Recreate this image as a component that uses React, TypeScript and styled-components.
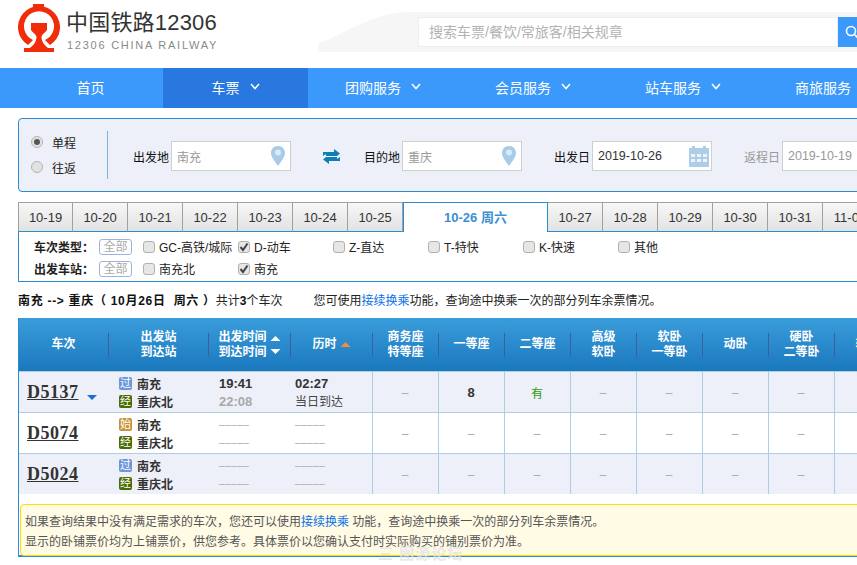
import React from "react";
import styled, { createGlobalStyle } from "styled-components";

const FONT = `"Liberation Sans", "Noto Sans CJK SC", sans-serif`;

const Global = createGlobalStyle`
  html, body { margin: 0; padding: 0; overflow: hidden; background: #fff; width: 857px; height: 565px; }
  body { font-family: ${FONT}; font-size: 12px; color: #222; }
  * { box-sizing: border-box; }
`;

const Page = styled.div`
  width: 1240px;
  height: 565px;
  position: relative;
  overflow: hidden;
`;

const Header = styled.header`
  height: 68px;
  display: flex;
  align-items: flex-start;
  padding-left: 18px;
`;
const LogoMark = styled.svg`
  width: 42px;
  height: 49px;
  margin-top: 3px;
  flex: none;
`;
const Brand = styled.div`
  margin-left: 7px;
  width: 251px;
  flex: none;
  padding-top: 9px;
`;
const BrandName = styled.div`
  font-size: 22px;
  line-height: 28px;
  letter-spacing: 0.2px;
  color: #333;
  white-space: nowrap;
  margin-left: -1px;
`;
const BrandSub = styled.div`
  font-size: 11px;
  line-height: 14px;
  margin-top: 1px;
  letter-spacing: 1.75px;
  color: #8a8a8a;
  white-space: nowrap;
`;
const Swoosh = styled.svg`
  width: 100px;
  height: 40px;
  margin-top: 12px;
  flex: none;
`;
const SearchBand = styled.div`
  flex: 1;
  margin-top: 12px;
  height: 40px;
  padding: 5px 0;
  background: #f6f6f6;
  display: flex;
`;
const SearchInput = styled.div`
  width: 420px;
  height: 30px;
  background: #fff;
  border: 1px solid #eee;
  font-size: 14px;
  line-height: 28px;
  color: #b2b2b2;
  padding-left: 10px;
`;
const SearchButton = styled.div`
  width: 60px;
  height: 30px;
  background: #3b99fc;
  display: flex;
  align-items: center;
  padding-left: 7px;
  color: #fff;
`;

const Nav = styled.nav`
  height: 40px;
  background: #3b99fc;
  display: flex;
  padding-left: 18px;
`;
const NavItem = styled.div<{ $active?: boolean; $w: number }>`
  width: ${(p) => p.$w}px;
  background: ${(p) => (p.$active ? "#2878e0" : "transparent")};
  display: flex;
  align-items: center;
  justify-content: center;
  gap: 10px;
  color: #fff;
  font-size: 14px;
  flex: none;
  padding-bottom: 2px;
`;
const Chevron = styled.svg`
  width: 10px;
  height: 7px;
  margin-top: -2px;
`;

const Main = styled.main`
  padding: 10px 0 0 18px;
`;
const QueryForm = styled.div`
  height: 74px;
  border: 1px solid #2b8cd2;
  border-radius: 4px;
  background: #edf0f8;
  display: flex;
  align-items: center;
  padding: 2px 0 0 12px;
`;
const RadioGroup = styled.div`
  display: flex;
  flex-direction: column;
  gap: 9px;
  width: 45px;
  flex: none;
  margin-top: -3px;
`;
const RadioRow = styled.div`
  display: flex;
  align-items: center;
  gap: 9px;
  height: 16px;
  color: #222;
`;
const Radio = styled.span<{ $on?: boolean }>`
  width: 12px;
  height: 12px;
  border-radius: 50%;
  border: 1px solid #b4b4b4;
  background: #e2e2e2;
  display: flex;
  align-items: center;
  justify-content: center;
  &::after {
    content: "";
    display: ${(p) => (p.$on ? "block" : "none")};
    width: 6px;
    height: 6px;
    border-radius: 50%;
    background: #555;
  }
`;
const Divider = styled.div`
  width: 1px;
  height: 48px;
  background: #7fb0d8;
  margin: -2px 0 0 31px;
  flex: none;
`;
const Field = styled.div<{ $ml: number; $muted?: boolean }>`
  display: flex;
  align-items: center;
  gap: 2px;
  margin-left: ${(p) => p.$ml}px;
  flex: none;
  color: ${(p) => (p.$muted ? "#999" : "#111")};
`;
const FieldLabel = styled.span`
  width: 36px;
  white-space: nowrap;
`;
const FieldBox = styled.div<{ $muted?: boolean }>`
  width: 120px;
  height: 30px;
  background: #fff;
  border: 1px solid #cfcfcf;
  display: flex;
  align-items: center;
  justify-content: space-between;
  padding: 0 2px 0 5px;
  color: ${(p) => (p.$muted ? "#999" : "#333")};
`;
const DateText = styled.span`
  font-size: 12.5px;
`;
const SwapIcon = styled.svg`
  width: 17px;
  height: 15px;
  margin-left: 32px;
  flex: none;
`;
const FieldIcon = styled.svg`
  width: 20px;
  height: 22px;
  flex: none;
`;

const Tabs = styled.div`
  display: flex;
  margin-top: 10px;
  height: 30px;
`;
const Tab = styled.div<{ $first?: boolean }>`
  width: 55px;
  flex: none;
  background: linear-gradient(#f7f7f7, #e2e2e2);
  border-top: 1px solid #a0a0a0;
  border-right: 1px solid #a0a0a0;
  border-left: ${(p) => (p.$first ? "1px solid #a0a0a0" : "none")};
  border-bottom: 1px solid #2b8cd2;
  display: flex;
  align-items: center;
  justify-content: center;
  font-size: 13px;
  color: #333;
`;
const ActiveTab = styled.div`
  width: 145px;
  flex: none;
  background: #fff;
  border: 1px solid #2b8cd2;
  border-bottom: none;
  display: flex;
  align-items: center;
  justify-content: center;
  font-size: 13px;
  font-weight: bold;
  color: #3a8fd0;
  padding-bottom: 2px;
`;
const FilterBox = styled.div`
  height: 50px;
  border: 1px solid #2b8cd2;
  border-top: none;
  padding: 4px 0 0 15px;
  display: flex;
  flex-direction: column;
  gap: 1px;
`;
const FilterRow = styled.div`
  height: 21px;
  display: flex;
  align-items: center;
`;
const FilterTitle = styled.span`
  width: 65px;
  font-weight: bold;
  color: #222;
  white-space: nowrap;
  flex: none;
`;
const AllTag = styled.span`
  width: 33px;
  height: 16px;
  border: 1px solid #9cb3e0;
  border-radius: 3px;
  color: #aaa;
  text-align: center;
  line-height: 14px;
  flex: none;
  margin-right: 11px;
`;
const Option = styled.span`
  width: 95px;
  flex: none;
  display: flex;
  align-items: center;
  gap: 4px;
  white-space: nowrap;
  color: #222;
`;
const Check = styled.span`
  width: 12px;
  height: 12px;
  border: 1px solid #b0b0b0;
  border-radius: 3px;
  background: #e6e6e6;
  display: flex;
  align-items: center;
  justify-content: center;
  flex: none;
`;
const CheckMark = styled.svg`
  width: 10px;
  height: 10px;
`;

const Summary = styled.div`
  margin-top: 10px;
  height: 18px;
  line-height: 18px;
  white-space: pre;
  color: #222;
`;
const Strong = styled.b`
  color: #111;
`;
const Route = styled(Strong)`
  letter-spacing: 0.7px;
`;
const Gap = styled.span`
  display: inline-block;
  width: 31px;
`;
const TransferLink = styled.span`
  color: #0a70e8;
`;

const ResultBox = styled.div`
  margin-top: 8px;
  border-left: 1px solid #2b8cd2;
  border-bottom: 2px solid #2b8cd2;
  height: 239px;
`;
const Table = styled.table`
  border-collapse: collapse;
  table-layout: fixed;
  width: 1013px;
`;
const HeadRow = styled.tr`
  height: 53px;
  background: linear-gradient(#3a9ddb, #1a78bd);
`;
const Th = styled.th`
  padding: 1px 0 0;
  color: #fff;
  font-weight: bold;
  font-size: 12px;
  line-height: 15px;
  text-align: center;
`;
const HeadInner = styled.div<{ $first?: boolean }>`
  height: 24px;
  border-left: ${(p) => (p.$first ? "none" : "1px solid #3c609e")};
  display: flex;
  align-items: center;
  justify-content: center;
  gap: 3px;
  white-space: pre-line;
`;
const SortIcon = styled.svg`
  width: 11px;
  height: 24px;
  flex: none;
`;
const Row = styled.tr<{ $alt?: boolean }>`
  height: 41px;
  background: ${(p) => (p.$alt ? "#edf0f8" : "#fff")};
`;
const Td = styled.td`
  padding: 2px 0 0;
  border-top: 1px solid #aecde0;
  vertical-align: middle;
`;
const SeatTd = styled(Td)<{ $tone?: string }>`
  border-left: 1px solid #aecde0;
  text-align: center;
  color: ${(p) => p.$tone || "#aaa"};
`;
const TrainCell = styled.div`
  display: flex;
  align-items: flex-end;
  padding: 0 0 2px 8px;
  gap: 8px;
`;
const TrainNo = styled.span`
  font-family: "Liberation Serif", serif;
  font-size: 18px;
  font-weight: bold;
  color: #333;
  text-decoration: underline;
  line-height: 20px;
  letter-spacing: 0.5px;
`;
const TrainArrow = styled.span`
  width: 0;
  height: 0;
  border-left: 5px solid transparent;
  border-right: 5px solid transparent;
  border-top: 5px solid #1a6fd0;
  margin-bottom: 2px;
`;
const Stations = styled.div`
  display: flex;
  flex-direction: column;
  gap: 4px;
  padding-left: 11px;
`;
const StationLine = styled.div`
  display: flex;
  align-items: center;
  gap: 5px;
  height: 14px;
  font-weight: bold;
  color: #333;
`;
const StationTag = styled.span<{ $bg: string }>`
  width: 13px;
  height: 13px;
  background: ${(p) => p.$bg};
  color: #fff;
  font-size: 11px;
  font-weight: normal;
  line-height: 13px;
  text-align: center;
  border-radius: 2px;
  flex: none;
`;
const TimeCol = styled.div<{ $pad: number }>`
  display: flex;
  flex-direction: column;
  padding-left: ${(p) => p.$pad}px;
  line-height: 18px;
`;
const Dep = styled.span`
  font-weight: bold;
  font-size: 13px;
  color: #333;
`;
const Arr = styled(Dep)`
  color: #a8a8a8;
`;
const Plain = styled.span`
  color: #444;
`;
const NoTime = styled.span`
  color: #aaa;
  font-size: 10px;
  letter-spacing: 0.5px;
  line-height: 18px;
`;
const Num = styled.b`
  color: #333;
  font-size: 13px;
`;
const Notice = styled.div`
  margin: 10px 0 0 1px;
  width: 1100px;
  height: 52px;
  background: #fffbe5;
  border: 1px solid #ffdd00;
  border-radius: 4px;
  padding: 7px 0 0 4px;
  color: #555;
  line-height: 20px;
  white-space: pre;
`;
const Watermark = styled.div`
  position: absolute;
  left: 378px;
  top: 542px;
  font-size: 15px;
  font-weight: bold;
  color: #e4e4e4;
  letter-spacing: 1px;
  opacity: 0.8;
  white-space: nowrap;
`;

const NavDown = () => (
  <Chevron viewBox="0 0 10 7">
    <polyline points="1,1 5,5.5 9,1" fill="none" stroke="#fff" strokeWidth="1.5" />
  </Chevron>
);

const Pin = () => (
  <FieldIcon viewBox="0 0 20 22">
    <path d="M10 1C5.5 1 3 4.300 3 8c0 4.500 4.500 9 7 13 2.500-4 7-8.500 7-13 0-3.700-2.500-7-7-7z" fill="#a8cbe8" />
    <circle cx="10" cy="7.500" r="3" fill="#dbeaf6" />
  </FieldIcon>
);

const Calendar = () => (
  <FieldIcon viewBox="0 0 20 22">
    <path d="M0 3h3V1h3v2h8V1h3v2h3v19H0z" fill="#aecde8" />
    <g fill="#eef4fa">
      <rect x="2" y="9" width="4" height="3" />
      <rect x="8" y="9" width="4" height="3" />
      <rect x="14" y="9" width="4" height="3" />
      <rect x="2" y="14" width="4" height="3" />
      <rect x="8" y="14" width="4" height="3" />
      <rect x="14" y="14" width="4" height="3" />
    </g>
  </FieldIcon>
);

const dates = ["10-19", "10-20", "10-21", "10-22", "10-23", "10-24", "10-25"];
const datesAfter = ["10-27", "10-28", "10-29", "10-30", "10-31", "11-01", "11-02", "11-03", "11-04"];
const typeOptions: [string, boolean][] = [
  ["GC-高铁/城际", false],
  ["D-动车", true],
  ["Z-直达", false],
  ["T-特快", false],
  ["K-快速", false],
  ["其他", false],
];
const stationOptions: [string, boolean][] = [
  ["南充北", false],
  ["南充", true],
];
const seatHeads = ["商务座\n特等座", "一等座", "二等座", "高级\n软卧", "软卧\n一等卧", "动卧", "硬卧\n二等卧", "软座", "硬座", "无座"];
const TAG = { 过: "#6f97d8", 始: "#c8923a", 经: "#4a6b00" };

type TrainRow = {
  no: string;
  from: keyof typeof TAG;
  alt: boolean;
  first?: boolean;
};
const rows: TrainRow[] = [
  { no: "D5137", from: "过", alt: true, first: true },
  { no: "D5074", from: "始", alt: false },
  { no: "D5024", from: "过", alt: true },
];

const Opt = ({ label, on }: { label: string; on: boolean }) => (
  <Option>
    <Check>
      {on && (
        <CheckMark viewBox="0 0 10 10">
          <polyline points="1.500,5 4,8 8.500,1.500" fill="none" stroke="#444" strokeWidth="2" />
        </CheckMark>
      )}
    </Check>
    {label}
  </Option>
);

export default function App() {
  return (
    <Page>
      <Global />
      <Header>
        <LogoMark viewBox="0 0 42 49">
          <path d="M10 42A21 21 0 1 1 32 42L27 37A15 15 0 1 0 15 37Z" fill="#f02c0a" />
          <path d="M15 1h11v5H15z" fill="#f02c0a" />
          <path
            d="M13 20H29V27C27 30 24 31 23.500 34C23.500 38 26 42 30 45H36V49H6V45H12C16 42 18.500 38 18.500 34C18 31 15 30 13 27Z"
            fill="#f02c0a"
          />
        </LogoMark>
        <Brand>
          <BrandName>中国铁路12306</BrandName>
          <BrandSub>12306 CHINA RAILWAY</BrandSub>
        </Brand>
        <Swoosh viewBox="0 0 100 40">
          <path d="M0 40V32C25 22 50 4 85 0H100V40z" fill="#f6f6f6" />
        </Swoosh>
        <SearchBand>
          <SearchInput>搜索车票/餐饮/常旅客/相关规章</SearchInput>
          <SearchButton>
            <svg width="14" height="14" viewBox="0 0 14 14">
              <circle cx="6" cy="6" r="4.500" fill="none" stroke="#fff" strokeWidth="1.600" />
              <path d="M9.500 9.500L13 13" stroke="#fff" strokeWidth="1.600" />
            </svg>
          </SearchButton>
        </SearchBand>
      </Header>
      <Nav>
        <NavItem $w={145}>首页</NavItem>
        <NavItem $w={145} $active>
          车票 <NavDown />
        </NavItem>
        <NavItem $w={150}>
          团购服务 <NavDown />
        </NavItem>
        <NavItem $w={150}>
          会员服务 <NavDown />
        </NavItem>
        <NavItem $w={150}>
          站车服务 <NavDown />
        </NavItem>
        <NavItem $w={150}>
          商旅服务 <NavDown />
        </NavItem>
      </Nav>
      <Main>
        <QueryForm>
          <RadioGroup>
            <RadioRow>
              <Radio $on />
              单程
            </RadioRow>
            <RadioRow>
              <Radio />
              往返
            </RadioRow>
          </RadioGroup>
          <Divider />
          <Field $ml={25}>
            <FieldLabel>出发地</FieldLabel>
            <FieldBox $muted>
              南充
              <Pin />
            </FieldBox>
          </Field>
          <SwapIcon viewBox="0 0 17 15">
            <path d="M0 7V3h11V0l6 4.500-3 2.500H3V5z" fill="#0e7fb5" />
            <path d="M17 8v4H6v3L0 10.500 3 8h11v2z" fill="#0e7fb5" />
          </SwapIcon>
          <Field $ml={24}>
            <FieldLabel>目的地</FieldLabel>
            <FieldBox $muted>
              重庆
              <Pin />
            </FieldBox>
          </Field>
          <Field $ml={32}>
            <FieldLabel>出发日</FieldLabel>
            <FieldBox>
              <DateText>2019-10-26</DateText>
              <Calendar />
            </FieldBox>
          </Field>
          <Field $ml={32} $muted>
            <FieldLabel>返程日</FieldLabel>
            <FieldBox $muted>
              <DateText>2019-10-19</DateText>
              <Calendar />
            </FieldBox>
          </Field>
        </QueryForm>

        <Tabs>
          {dates.map((d, i) => (
            <Tab key={d} $first={i === 0}>
              {d}
            </Tab>
          ))}
          <ActiveTab>10-26 周六</ActiveTab>
          {datesAfter.map((d) => (
            <Tab key={d}>{d}</Tab>
          ))}
        </Tabs>
        <FilterBox>
          <FilterRow>
            <FilterTitle>车次类型：</FilterTitle>
            <AllTag>全部</AllTag>
            {typeOptions.map(([l, on]) => (
              <Opt key={l} label={l} on={on} />
            ))}
          </FilterRow>
          <FilterRow>
            <FilterTitle>出发车站：</FilterTitle>
            <AllTag>全部</AllTag>
            {stationOptions.map(([l, on]) => (
              <Opt key={l} label={l} on={on} />
            ))}
          </FilterRow>
        </FilterBox>

        <Summary>
          <Route>南充 --&gt; 重庆（ 10月26日  周六 ）</Route>共计<Strong>3</Strong>个车次
          <Gap />
          您可使用<TransferLink>接续换乘</TransferLink>功能，查询途中换乘一次的部分列车余票情况。
        </Summary>

        <ResultBox>
          <Table>
            <colgroup>
              <col style={{ width: 89 }} />
              <col style={{ width: 100 }} />
              <col style={{ width: 82 }} />
              <col style={{ width: 82 }} />
              {seatHeads.map((h) => (
                <col key={h} style={{ width: 66 }} />
              ))}
            </colgroup>
            <thead>
              <HeadRow>
                <Th>
                  <HeadInner $first>车次</HeadInner>
                </Th>
                <Th>
                  <HeadInner>{"出发站\n到达站"}</HeadInner>
                </Th>
                <Th>
                  <HeadInner>
                    {"出发时间\n到达时间"}
                    <SortIcon viewBox="0 0 11 24">
                      <path d="M5.500 3L10.500 8H.5z" fill="#fff" />
                      <path d="M5.500 21L10.500 16H.5z" fill="#fff" />
                    </SortIcon>
                  </HeadInner>
                </Th>
                <Th>
                  <HeadInner>
                    历时
                    <SortIcon viewBox="0 0 11 24">
                      <path d="M5.500 9L10.500 14H.5z" fill="#f58b3c" />
                    </SortIcon>
                  </HeadInner>
                </Th>
                {seatHeads.map((h) => (
                  <Th key={h}>
                    <HeadInner>{h}</HeadInner>
                  </Th>
                ))}
              </HeadRow>
            </thead>
            <tbody>
              {rows.map((r) => (
                <Row key={r.no} $alt={r.alt}>
                  <Td>
                    <TrainCell>
                      <TrainNo>{r.no}</TrainNo>
                      {r.first && <TrainArrow />}
                    </TrainCell>
                  </Td>
                  <Td>
                    <Stations>
                      <StationLine>
                        <StationTag $bg={TAG[r.from]}>{r.from}</StationTag>南充
                      </StationLine>
                      <StationLine>
                        <StationTag $bg={TAG["经"]}>经</StationTag>重庆北
                      </StationLine>
                    </Stations>
                  </Td>
                  <Td>
                    <TimeCol $pad={11}>
                      {r.first ? (
                        <>
                          <Dep>19:41</Dep>
                          <Arr>22:08</Arr>
                        </>
                      ) : (
                        <>
                          <NoTime>–––––</NoTime>
                          <NoTime>–––––</NoTime>
                        </>
                      )}
                    </TimeCol>
                  </Td>
                  <Td>
                    <TimeCol $pad={5}>
                      {r.first ? (
                        <>
                          <Dep>02:27</Dep>
                          <Plain>当日到达</Plain>
                        </>
                      ) : (
                        <>
                          <NoTime>–––––</NoTime>
                          <NoTime>–––––</NoTime>
                        </>
                      )}
                    </TimeCol>
                  </Td>
                  {seatHeads.map((h, i) => (
                    <SeatTd key={h} $tone={r.first && i === 2 ? "#2a9a10" : undefined}>
                      {r.first && i === 1 ? <Num>8</Num> : r.first && i === 2 ? "有" : "–"}
                    </SeatTd>
                  ))}
                </Row>
              ))}
            </tbody>
          </Table>
          <Notice>
            如果查询结果中没有满足需求的车次，您还可以使用<TransferLink>接续换乘</TransferLink> 功能，查询途中换乘一次的部分列车余票情况。
            {"\n"}显示的卧铺票价均为上铺票价，供您参考。具体票价以您确认支付时实际购买的铺别票价为准。
          </Notice>
        </ResultBox>
      </Main>
      <Watermark>三 图源论坛</Watermark>
    </Page>
  );
}
